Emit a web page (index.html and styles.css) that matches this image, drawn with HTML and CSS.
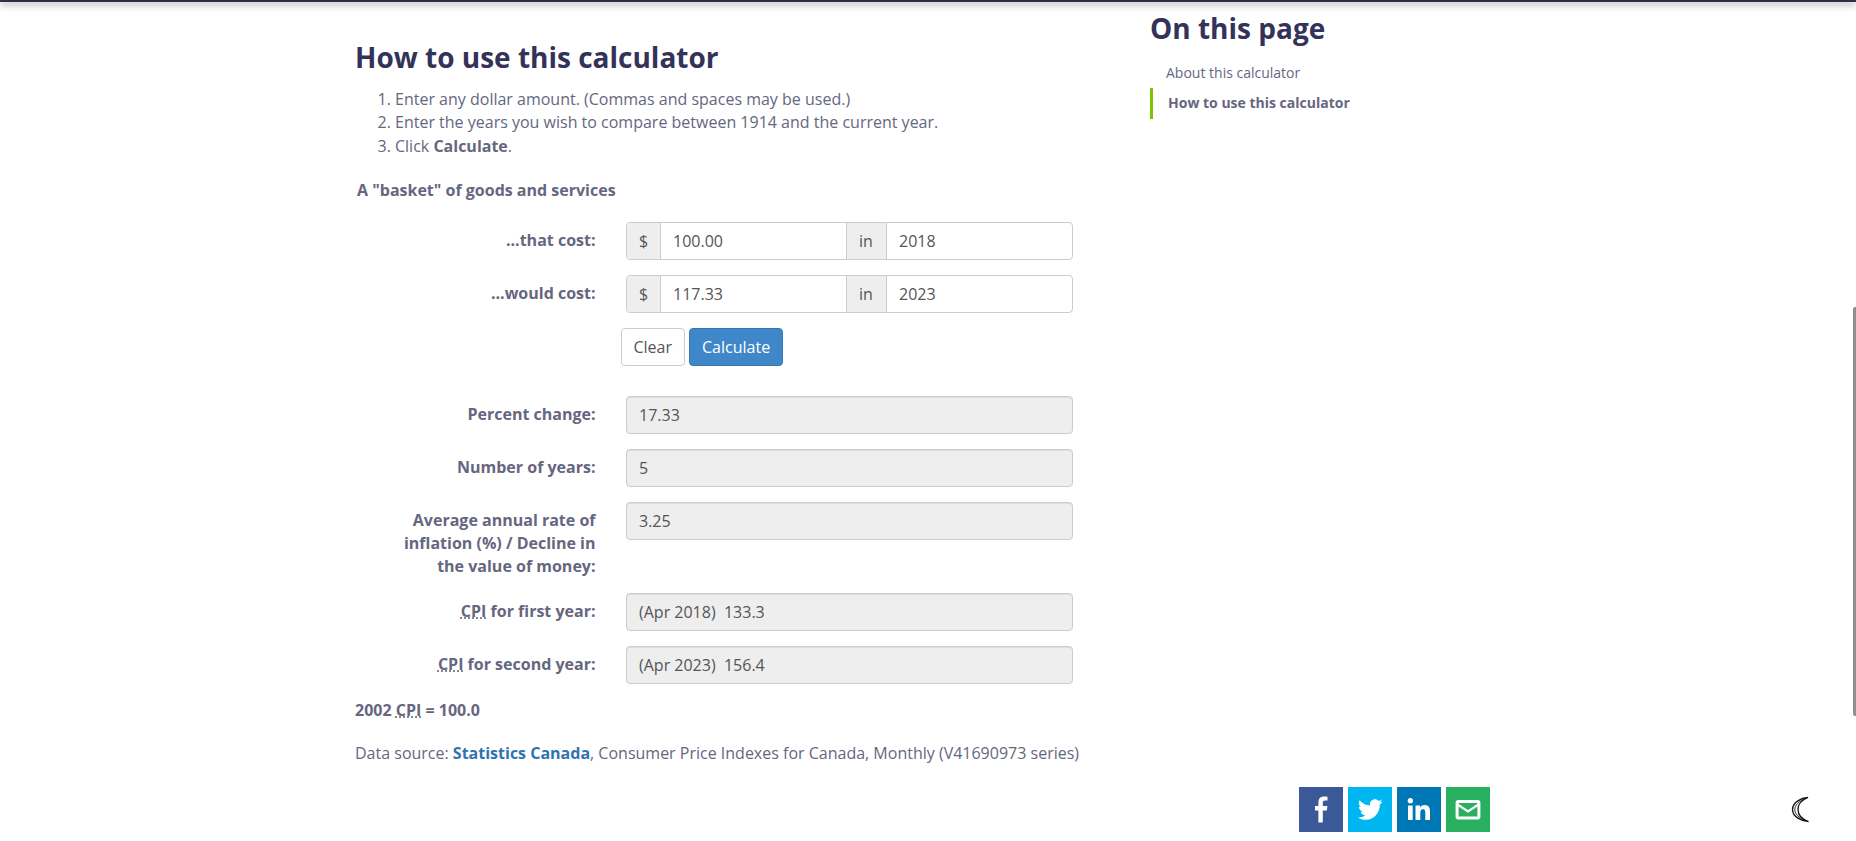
FILE: index.html
```html
<!DOCTYPE html>
<html lang="en">
<head>
<meta charset="utf-8">
<title>Inflation calculator</title>
<link rel="stylesheet" href="styles.css">
</head>
<body>
<div class="topbar"></div>
<div class="page">
  <main class="content">
    <h2 class="title">How to use this calculator</h2>
    <ol class="steps">
      <li>Enter any dollar amount. (Commas and spaces may be used.)</li>
      <li>Enter the years you wish to compare between 1914 and the current year.</li>
      <li>Click <strong>Calculate</strong>.</li>
    </ol>
    <p class="basket">A "basket" of goods and services</p>
    <form class="calc">
      <div class="row">
        <label class="lab">...that cost:</label>
        <div class="group">
          <span class="addon addon-d">$</span>
          <span class="field">100.00</span>
          <span class="addon addon-in">in</span>
          <span class="field">2018</span>
        </div>
      </div>
      <div class="row">
        <label class="lab">...would cost:</label>
        <div class="group">
          <span class="addon addon-d">$</span>
          <span class="field">117.33</span>
          <span class="addon addon-in">in</span>
          <span class="field">2023</span>
        </div>
      </div>
      <div class="actions">
        <button type="button" class="btn btn-clear">Clear</button>
        <button type="button" class="btn btn-calc">Calculate</button>
      </div>
      <div class="row">
        <label class="lab">Percent change:</label>
        <div class="output">17.33</div>
      </div>
      <div class="row">
        <label class="lab">Number of years:</label>
        <div class="output">5</div>
      </div>
      <div class="row">
        <label class="lab">Average annual rate of inflation (%) / Decline in the value of money:</label>
        <div class="output">3.25</div>
      </div>
      <div class="row">
        <label class="lab"><abbr class="cpi">CPI</abbr> for first year:</label>
        <div class="output">(Apr 2018)  133.3</div>
      </div>
      <div class="row">
        <label class="lab"><abbr class="cpi">CPI</abbr> for second year:</label>
        <div class="output">(Apr 2023)  156.4</div>
      </div>
    </form>
    <p class="base"><strong>2002 <abbr class="cpi">CPI</abbr> = 100.0</strong></p>
    <p class="source">Data source: <a class="link" href="#">Statistics Canada</a>, Consumer Price Indexes for Canada, Monthly (V41690973 series)</p>
  </main>
  <aside class="side">
    <h2 class="side-title">On this page</h2>
    <ul class="toc">
      <li class="toc-item"><a href="#">About this calculator</a></li>
      <li class="toc-item toc-active"><a href="#">How to use this calculator</a></li>
    </ul>
  </aside>
</div>
<div class="share">
  <a class="soc soc-fb" href="#" aria-label="Facebook">
    <svg width="44" height="45" viewBox="0 0 44 45"><path fill="#fff" d="M23.800 35.500V23.600h4l.6-4.700h-4.600v-3c0-1.400.4-2.300 2.300-2.300h2.400V9.800c-.5-.1-1.900-.2-3.500-.2-3.500 0-5.600 2.100-5.600 5.900v3.400h-3.400v4.700h3.400v11.900z"/></svg>
  </a>
  <a class="soc soc-tw" href="#" aria-label="Twitter">
    <svg width="44" height="45" viewBox="0 0 44 45"><path fill="#fff" d="M34.500 14.500c-.9.400-1.900.7-2.900.9 1.100-.6 1.800-1.600 2.200-2.800-1 .6-2.100 1-3.200 1.300-.9-1-2.300-1.600-3.700-1.600-2.800 0-5 2.300-5 5.100 0 .4 0 .8.100 1.200-4.200-.2-7.900-2.200-10.400-5.300-.4.700-.7 1.600-.7 2.600 0 1.800.9 3.300 2.200 4.200-.8 0-1.600-.2-2.300-.6v.1c0 2.500 1.700 4.500 4 5-.4.100-.9.200-1.300.2-.3 0-.6 0-.9-.1.600 2 2.500 3.500 4.700 3.600-1.700 1.400-3.900 2.200-6.200 2.200-.4 0-.8 0-1.200-.1 2.200 1.400 4.800 2.300 7.700 2.300 9.200 0 14.200-7.800 14.200-14.500v-.7c1-.7 1.800-1.600 2.500-2.600z"/></svg>
  </a>
  <a class="soc soc-in" href="#" aria-label="LinkedIn">
    <svg width="44" height="45" viewBox="0 0 44 45"><path fill="#fff" d="M11 18.500h4.700V33H11zM13.350 11a2.650 2.650 0 1 1 0 5.300 2.650 2.650 0 0 1 0-5.300zM18.500 18.500H23v2c.7-1.300 2.300-2.400 4.500-2.400 4.700 0 5.500 3 5.500 7V33h-4.700v-7c0-1.700 0-3.800-2.300-3.800s-2.700 1.800-2.700 3.700V33h-4.800z"/></svg>
  </a>
  <a class="soc soc-mail" href="#" aria-label="Email">
    <svg width="44" height="45" viewBox="0 0 44 45"><rect x="11.100" y="14.500" width="21.800" height="16.400" rx="1.200" fill="none" stroke="#fff" stroke-width="3"/><path fill="none" stroke="#fff" stroke-width="2.200" d="M11.500 17.500l10.500 7 10.500-7"/></svg>
  </a>
</div>
<button type="button" class="mode" aria-label="Dark mode">
  <svg width="20" height="27" viewBox="0 0 20 27"><path fill="#fff" stroke="#111" stroke-width="1.300" d="M17 1.500C10.500 2 1.500 6 1.500 13.500S10.500 25 17.500 25.500C12 23.500 7 19.500 7 13.500S12 3.500 17 1.500z"/><path fill="none" stroke="#111" stroke-width=".9" d="M13 3.500C8 5.500 3.800 9 3.800 13.500s4.200 8.500 9.700 10"/></svg>
</button>
<div class="thumb"></div>
</body>
</html>
```

FILE: styles.css
```css
html, body {
  margin: 0;
  height: 841px;
  overflow: hidden;
  background: #fff;
}
body {
  font-family: "Open Sans", "Liberation Sans", sans-serif;
  font-size: 16px;
  line-height: 23.5px;
  color: #66667f;
  position: relative;
}
.topbar {
  position: absolute;
  top: 0;
  left: 0;
  right: 0;
  height: 2px;
  background: #2f2f3f;
  box-shadow: 0 2px 7px rgba(30, 30, 50, 0.7);
}
.page {
  display: flex;
  padding-left: 355px;
  height: 787px;
}
.content {
  width: 733px;
  flex: none;
  padding-top: 38px;
}
.title {
  margin: 0 0 11.6px;
  font-size: 28px;
  line-height: 38px;
  font-weight: 700;
  color: #33335a;
}
.steps {
  margin: 0 0 21.4px;
  padding-left: 40px;
}
.basket {
  margin: 0 0 19px 2px;
  font-weight: 700;
}
.calc {
  margin: 0 0 0 -15px;
}
.row {
  display: flex;
  gap: 30.500px;
  margin-bottom: 15px;
}
.lab {
  width: 255.500px;
  flex: none;
  box-sizing: border-box;
  padding: 7px 0 0 55px;
  text-align: right;
  font-weight: 700;
  line-height: 23px;
}
.cpi {
  text-decoration: underline dotted;
}
.group {
  display: flex;
  width: 447px;
  height: 38px;
  box-sizing: border-box;
  border: 1px solid #ccc;
  border-radius: 4px;
  color: #555;
  overflow: hidden;
}
.addon {
  flex: none;
  box-sizing: border-box;
  background: #eee;
  text-align: center;
  line-height: 36px;
}
.addon-d {
  width: 34px;
  border-right: 1px solid #ccc;
}
.addon-in {
  width: 41px;
  padding-right: 1px;
  border-left: 1px solid #ccc;
  border-right: 1px solid #ccc;
}
.field {
  flex: 1;
  padding: 0 12px;
  line-height: 36px;
}
.actions {
  display: flex;
  gap: 4px;
  margin: 0 0 30px 281px;
}
.btn {
  height: 38px;
  box-sizing: border-box;
  padding: 1px 12px 0;
  border: 1px solid #ccc;
  border-radius: 4px;
  font: inherit;
  background: #fff;
  color: #555;
}
.btn-clear {
  padding: 1px 11.500px 0;
}
.btn-calc {
  padding: 1px 11.500px 0 12.500px;
  background: #3f87c8;
  border-color: #3578b5;
  color: #fff;
}
.output {
  width: 447px;
  height: 38px;
  box-sizing: border-box;
  padding: 0 12px;
  border: 1px solid #ccc;
  border-radius: 4px;
  background: #eee;
  color: #555;
  line-height: 36px;
  white-space: pre;
  box-shadow: inset 0 1px 1px rgba(0, 0, 0, 0.075);
}
.base {
  margin: 14px 0 20px;
}
.source {
  margin: 0;
  white-space: nowrap;
}
.link {
  color: #3073b0;
  font-weight: 700;
  text-decoration: none;
}
.side {
  margin-left: 62px;
  width: 300px;
  padding-top: 9px;
}
.side-title {
  margin: 0 0 16px;
  font-size: 28px;
  line-height: 38px;
  font-weight: 700;
  color: #33335a;
}
.toc {
  list-style: none;
  margin: 0;
  padding: 0;
  font-size: 14px;
}
.toc a {
  color: inherit;
  text-decoration: none;
}
.toc-item {
  padding-left: 16px;
  line-height: 20px;
  margin-bottom: 5px;
}
.toc-active {
  border-left: 3px solid #7fc400;
  padding: 5px 0 6px 15px;
  margin-bottom: 0;
  font-weight: 700;
}
.share {
  display: flex;
  gap: 5px;
  padding-left: 1299px;
}
.soc {
  display: block;
  width: 44px;
  height: 45px;
}
.soc-fb { background: #3b5998; }
.soc-tw { background: #00b6f1; }
.soc-in { background: #0077b5; }
.soc-mail { background: #28b060; }
.mode {
  position: absolute;
  left: 1791px;
  top: 796px;
  width: 20px;
  height: 27px;
  padding: 0;
  border: 0;
  background: none;
}
.thumb {
  position: absolute;
  right: 0;
  top: 307px;
  width: 3px;
  height: 409px;
  border-radius: 2px 0 0 2px;
  background: #8f8f8f;
}
```
